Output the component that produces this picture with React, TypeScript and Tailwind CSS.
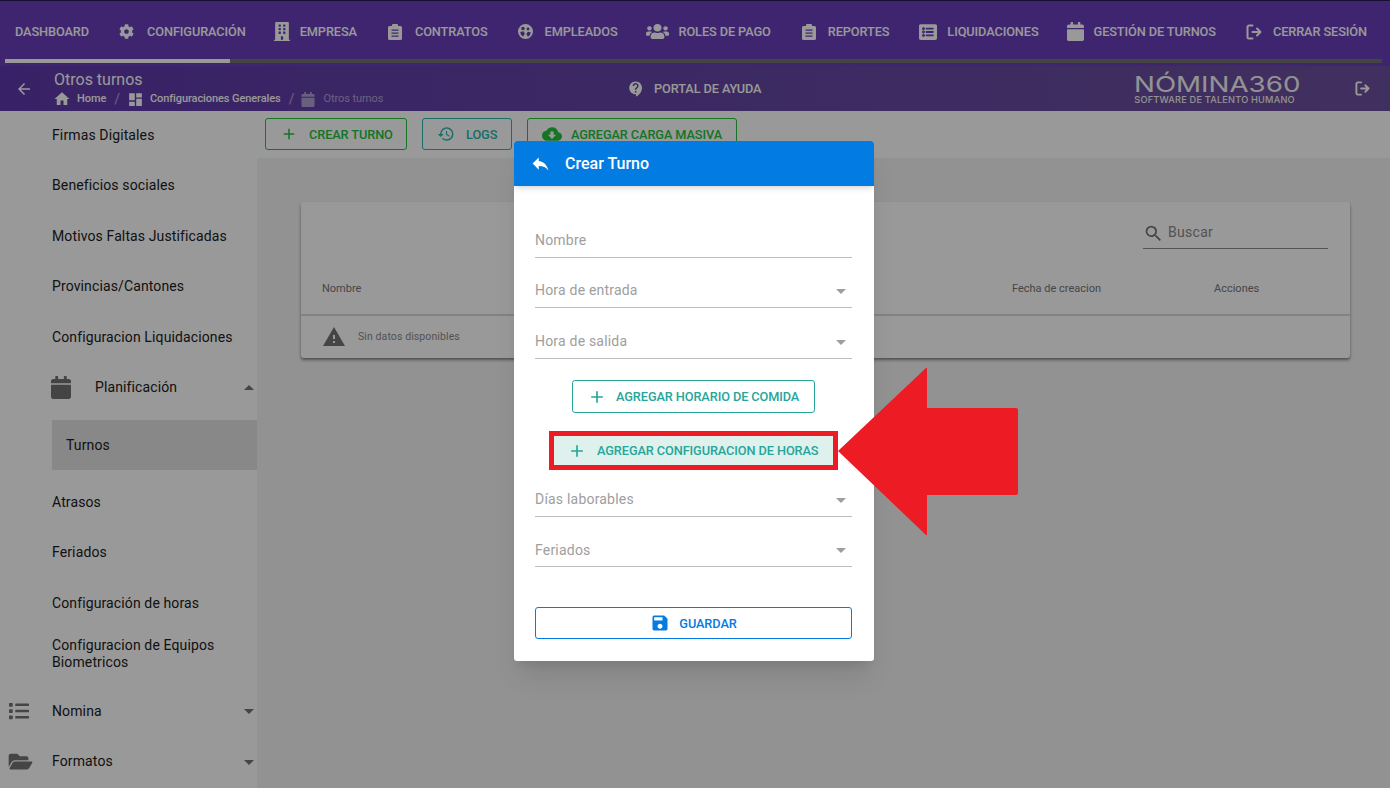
import React from "react";
import { FaBuilding, FaCalendar, FaCog, FaFolderOpen, FaList, FaListAlt, FaUsers } from "react-icons/fa";
import {
  MdAdd, MdArrowBack, MdArrowDropDown, MdArrowDropUp, MdCloudDownload, MdContactSupport, MdDashboard,
  MdHistory, MdHome, MdReply, MdSave, MdSearch, MdWarning,
} from "react-icons/md";

function ClipIcon({ className }: { className?: string }) {
  return (
    <svg viewBox="0 0 14 16" className={className} fill="currentColor" preserveAspectRatio="none">
      <path fillRule="evenodd" d="M5 0h4a1 1 0 0 1 1 1v1h2.500A1.500 1.500 0 0 1 14 3.500v11a1.500 1.500 0 0 1-1.500 1.500h-11A1.500 1.500 0 0 1 0 14.500v-11A1.500 1.500 0 0 1 1.500 2H4V1a1 1 0 0 1 1-1zM3.500 5.500v1.300h7V5.500zm0 3v1.300h7V8.500zm0 3v1.300h7v-1.300z" />
    </svg>
  );
}

function FaceIcon({ className }: { className?: string }) {
  return (
    <svg viewBox="0 0 16 16" className={className} fill="currentColor">
      <path fillRule="evenodd" d="M8 0a8 8 0 1 1 0 16A8 8 0 0 1 8 0zM5.300 2.800a1.900 1.900 0 1 0 0 3.800 1.900 1.900 0 0 0 0-3.800zm5.400 1a1.500 1.500 0 1 0 0 3 1.500 1.500 0 0 0 0-3zM2.500 8.500c.1 2.300 1.200 4 3 4.800l1.800-2.800-1.500-2.700zm11 .3-3-.6-1.600 2.500 1.600 2.900c1.800-.8 2.900-2.500 3-4.800z" />
    </svg>
  );
}

function ExitIcon({ className }: { className?: string }) {
  return (
    <svg viewBox="0 0 16 16" className={className} fill="none" stroke="currentColor" strokeWidth="2" strokeLinecap="round" strokeLinejoin="round">
      <path d="M6.500 1.500H3A1.500 1.500 0 0 0 1.500 3v10A1.500 1.500 0 0 0 3 14.500h3.500" />
      <path d="M6.500 8H14.500M11 4.500 14.500 8 11 11.500" />
    </svg>
  );
}

const navItems: { label: string; icon?: React.ReactNode; cls: string }[] = [
  { label: "DASHBOARD", cls: "ml-[15px]" },
  { label: "CONFIGURACIÓN", icon: <FaCog className="w-[15px] h-[15px]" />, cls: "ml-[30px] gap-[13px]" },
  { label: "EMPRESA", icon: <FaBuilding preserveAspectRatio="none" className="w-[16px] h-[19px]" />, cls: "ml-[28px] gap-[10px]" },
  { label: "CONTRATOS", icon: <ClipIcon className="w-[14px] h-[16px]" />, cls: "ml-[31px] gap-[13px]" },
  { label: "EMPLEADOS", icon: <FaceIcon className="w-[15px] h-[15px]" />, cls: "ml-[30px] gap-[12px]" },
  { label: "ROLES DE PAGO", icon: <FaUsers preserveAspectRatio="none" className="w-[23px] h-[17px]" />, cls: "ml-[28px] gap-[10px]" },
  { label: "REPORTES", icon: <ClipIcon className="w-[14px] h-[16px]" />, cls: "ml-[31px] gap-[12px]" },
  { label: "LIQUIDACIONES", icon: <FaListAlt preserveAspectRatio="none" className="w-[18px] h-[18px]" />, cls: "ml-[30px] gap-[10px]" },
  { label: "GESTIÓN DE TURNOS", icon: <FaCalendar preserveAspectRatio="none" className="w-[17px] h-[19px]" />, cls: "ml-[28px] gap-[10px]" },
  { label: "CERRAR SESIÓN", icon: <ExitIcon className="w-[16px] h-[16px]" />, cls: "ml-[30px] gap-[11px]" },
];

function SideRow({ label, icon, caret, indent }: { label: string; icon?: React.ReactNode; caret?: "up" | "down"; indent?: boolean }) {
  return (
    <div className="h-[50.5px] flex items-center text-[14px] tracking-[0.12px] text-[#212121]">
      <div className="w-[52px] shrink-0 flex pl-2 text-[#737373]">{!indent && icon}</div>
      {indent && <div className="w-[43px] shrink-0 text-[#737373]">{icon}</div>}
      <span className="flex-1 leading-[17px]">{label}</span>
      {caret === "up" && <MdArrowDropUp className="w-6 h-6 -mr-1 text-[#737373]" />}
      {caret === "down" && <MdArrowDropDown className="w-6 h-6 -mr-1 text-[#737373]" />}
    </div>
  );
}

function Field({ label, select, h, labelCls = "-mt-[1px]" }: { label: string; select?: boolean; h: string; labelCls?: string }) {
  return (
    <div className={`${h} flex items-end`}>
      <div className="w-full h-[33px] border-b border-[#bdbdbd] flex items-center justify-between text-[14px] tracking-[0.2px] text-[#9e9e9e]">
        <span className={labelCls}>{label}</span>
        {select && <MdArrowDropDown className="w-6 h-6 -mr-[1px] text-[#9e9e9e]" />}
      </div>
    </div>
  );
}

export default function App() {
  return (
    <div className="relative w-[1390px] h-[788px] overflow-hidden bg-white font-[Roboto,sans-serif]">
      {/* Top navigation */}
      <header className="h-[66px] bg-[#693fbb] border-t border-[#2a1a50] text-white">
        <nav className="h-[57px] flex items-center text-[12.750px] font-medium tracking-[-0.1px] whitespace-nowrap pt-[4px]">
          {navItems.map((n) => (
            <div key={n.label} className={`flex items-center ${n.cls}`}>
              {n.icon}
              <span>{n.label}</span>
            </div>
          ))}
        </nav>
        <div className="ml-[5px] mr-[8px] h-[4px] bg-[#727272] mt-[1px]">
          <div className="w-[225px] h-full bg-white" />
        </div>
      </header>

      {/* Sub bar */}
      <div className="h-[45px] bg-gradient-to-r from-[#5f38ac] to-[#6c509e] flex items-center text-white">
        <MdArrowBack className="w-[18px] h-[18px] ml-[15px] mr-[21px]" />
        <div className="w-[574px] shrink-0 pt-[2px]">
          <div className="text-[16px] leading-[18px]">Otros turnos</div>
          <div className="flex items-center text-[11px] tracking-[-0.08px] font-medium h-[18px] mt-[1px] whitespace-nowrap">
            <MdHome className="w-[18px] h-[18px] -ml-[1px] mr-[6px]" />
            <span>Home</span>
            <span className="ml-[8px] mr-[7px] text-[14px] font-normal opacity-50">/</span>
            <MdDashboard className="w-[17px] h-[17px] mr-[6px]" />
            <span>Configuraciones Generales</span>
            <span className="ml-[8px] mr-[7px] text-[14px] font-normal opacity-50">/</span>
            <FaCalendar className="w-[14px] h-[15px] mr-[8px] opacity-50" />
            <span className="opacity-50 font-normal">Otros turnos</span>
          </div>
        </div>
        <div className="flex items-center gap-[9px] text-[12.750px] font-medium tracking-[-0.1px]">
          <MdContactSupport className="w-[18px] h-[18px] -ml-[1px]" />
          <span>PORTAL DE AYUDA</span>
        </div>
        <div className="ml-[373px] w-[164px] font-[Inter,sans-serif] text-[#f5f5f5] flex flex-col">
          <div className="h-[22px] flex items-center text-[22px] leading-none font-normal whitespace-nowrap origin-left scale-x-[1.26]">
            NÓMINA360
          </div>
          <div className="mt-[1px] text-[9.200px] leading-[8px] font-medium whitespace-nowrap tracking-[0.2px]">SOFTWARE DE TALENTO HUMANO</div>
        </div>
        <ExitIcon className="w-[15px] h-[15px] ml-[57px]" />
      </div>

      {/* Body */}
      <div className="flex h-[677px]">
        <aside className="w-[257px] shrink-0 overflow-hidden -mt-[1px]">
          <SideRow label="Firmas Digitales" />
          <SideRow label="Beneficios sociales" />
          <SideRow label="Motivos Faltas Justificadas" />
          <SideRow label="Provincias/Cantones" />
          <SideRow label="Configuracion Liquidaciones" />
          <SideRow label="Planificación" indent caret="up" icon={<FaCalendar className="w-[20px] h-[23px] -ml-[1px] text-[#727272]" />} />
          <div className="mt-[7px] ml-[52px] h-[50px] bg-[#e3e3e3] flex items-center pl-[14px] text-[14px] tracking-[0.12px] text-[#212121]">Turnos</div>
          <div className="h-[7px]" />
          <SideRow label="Atrasos" />
          <SideRow label="Feriados" />
          <SideRow label="Configuración de horas" />
          <SideRow label="Configuracion de Equipos Biometricos" />
          <div className="h-[7px]" />
          <SideRow label="Nomina" caret="down" icon={<FaList className="w-[24px] h-[20px] -ml-[1px]" />} />
          <SideRow label="Formatos" caret="down" icon={<FaFolderOpen className="w-[25px] h-[21px]" />} />
        </aside>
        <main className="flex-1 bg-[#f3f3f3] flex flex-col">
          <div className="h-[47px] bg-white flex items-start pt-[7px] pl-[8px] gap-[15px] text-[12.750px] font-medium tracking-[-0.1px]">
            <div className="w-[142px] h-[32px] border border-[#22c33f] rounded-[3px] text-[#22c33f] flex items-center pl-[14px] gap-[11px]">
              <MdAdd className="w-[18px] h-[18px]" />
              <span className="mt-[1px]">CREAR TURNO</span>
            </div>
            <div className="w-[90px] h-[32px] border border-[#2cb5ae] rounded-[3px] text-[#2cb5ae] flex items-center pl-[14px] gap-[11px]">
              <MdHistory className="w-[18px] h-[18px]" />
              <span className="mt-[1px]">LOGS</span>
            </div>
            <div className="w-[210px] h-[32px] border border-[#22c33f] rounded-[3px] text-[#22c33f] flex items-center pl-[14px] gap-[9px]">
              <MdCloudDownload className="w-[20px] h-[20px]" />
              <span className="mt-[1px]">AGREGAR CARGA MASIVA</span>
            </div>
          </div>
          <section className="ml-[44px] mr-[40px] mt-[44px] h-[156px] bg-white rounded-[3px] shadow-[0_2px_3px_rgba(0,0,0,0.45)]">
            <div className="h-[64px] flex justify-end pr-[22px] pt-[16px]">
              <div className="w-[185px] h-[31px] border-b border-[#8a8a8a] flex items-center text-[14px] tracking-[0.3px] text-[#8a8a8a]">
                <MdSearch className="w-[21px] h-[21px] mr-[4px] text-[#757575]" />
                <span className="-mt-[1px]">Buscar</span>
              </div>
            </div>
            <div className="h-[50px] border-b-2 border-[#d9d9d9] grid grid-cols-[690px_202px_1fr] items-center pl-[21px] text-[11px] text-[#757575] pb-[2px]">
              <span>Nombre</span>
              <span>Fecha de creacion</span>
              <span>Acciones</span>
            </div>
            <div className="h-[42px] flex items-center pl-[21px] text-[10.500px] tracking-[0.1px] text-[#8a8a8a]">
              <MdWarning className="w-[24px] h-[24px] mr-[12px] text-[#737373]" />
              <span>Sin datos disponibles</span>
            </div>
          </section>
        </main>
      </div>

      {/* Modal backdrop */}
      <div className="absolute inset-0 bg-black/40 flex justify-center pt-[141px] pr-[2px]">
        <div className="w-[360px] h-[520px] bg-white rounded-[3px] shadow-xl overflow-hidden flex flex-col">
          <div className="h-[45px] shrink-0 bg-[#027be3] text-white flex items-center pl-[16px] shadow-md">
            <MdReply className="w-[21px] h-[21px]" />
            <span className="ml-[14px] text-[16px] font-medium">Crear Turno</span>
          </div>
          <div className="pl-[21px] pr-[22px] flex flex-col">
            <Field label="Nombre" h="h-[72px]" />
            <Field label="Hora de entrada" select h="h-[50px]" />
            <Field label="Hora de salida" select h="h-[51px]" />
            <div className="mt-[21px] mx-auto w-[243px] h-[33px] border border-[#26a69a] rounded-[3px] text-[#26a69a] flex items-center pl-[14px] gap-[9px] text-[12.750px] font-medium tracking-[-0.1px]">
              <MdAdd className="w-[20px] h-[20px]" />
              <span>AGREGAR HORARIO DE COMIDA</span>
            </div>
            <div className="mt-[18px] ml-[14px] w-[289px] h-[39px] border-[5px] border-[#ed1c24] bg-[#dff1ed] text-[#26a69a] flex items-center pl-[13px] gap-[10px] text-[12.750px] font-medium tracking-[-0.1px]">
              <MdAdd className="w-[20px] h-[20px]" />
              <span>AGREGAR CONFIGURACION DE HORAS</span>
            </div>
            <Field label="Días laborables" select h="h-[47px]" />
            <Field label="Feriados" select h="h-[50px]" labelCls="mt-[1px]" />
            <div className="mt-[40px] h-[32px] border border-[#027be3] rounded-[3px] text-[#027be3] flex items-center justify-center gap-[9px] text-[12.750px] font-medium tracking-[-0.1px]">
              <MdSave className="w-[20px] h-[20px]" />
              <span className="mt-[1px]">GUARDAR</span>
            </div>
          </div>
        </div>
      </div>

      {/* Annotation arrow */}
      <svg className="absolute left-[836px] top-[365px] w-[184px] h-[173px]" viewBox="0 0 184 173">
        <path d="M2 86 90 3Q91 2 91 4V43H180Q182 43 182 45V128Q182 130 180 130H91V169Q91 171 90 170Z" fill="#ed1c24" />
      </svg>
    </div>
  );
}
